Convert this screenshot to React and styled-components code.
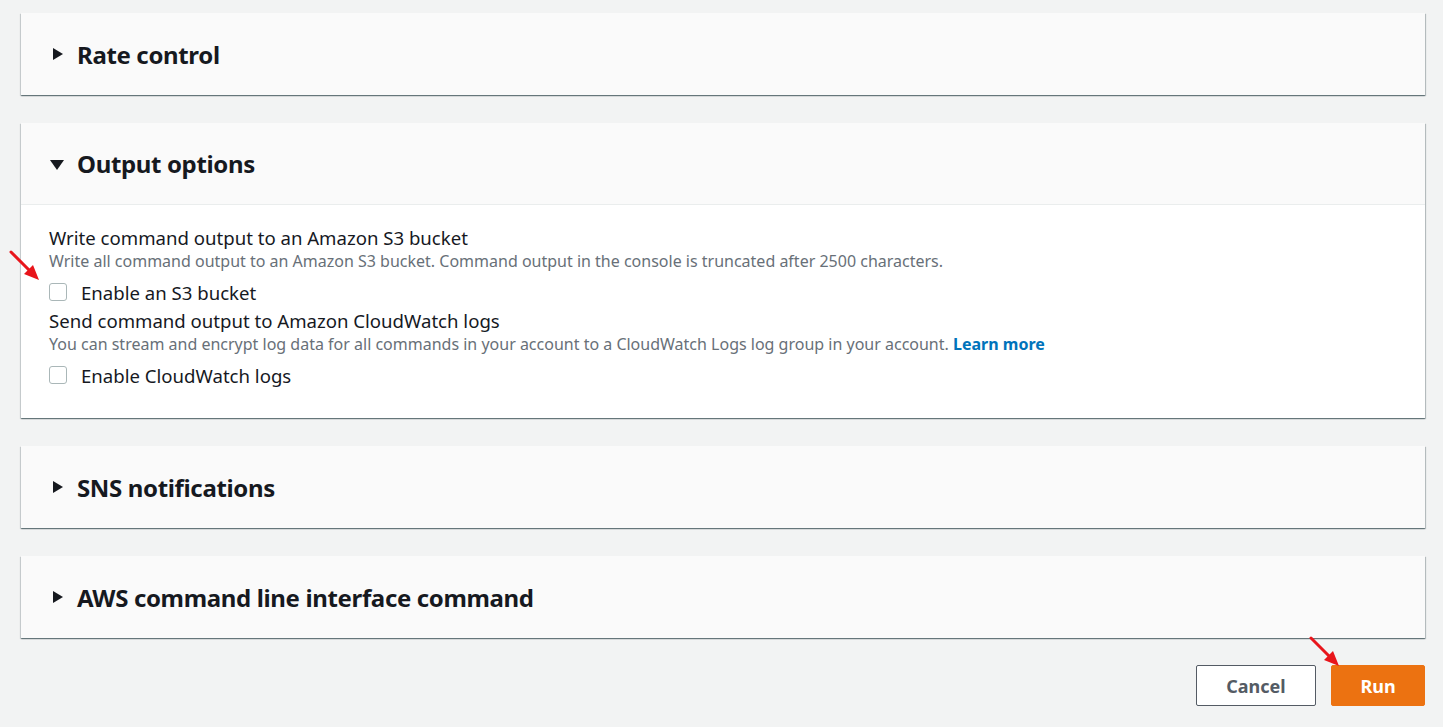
import React from "react";
import styled, { createGlobalStyle } from "styled-components";

const Global = createGlobalStyle`
  html, body { margin: 0; padding: 0; background: #f2f3f3; }
  body { font-family: "Noto Sans", "Open Sans", sans-serif; color: #16191f; }
`;

const Page = styled.div`
  position: relative;
  width: 1443px;
  height: 727px;
  overflow: hidden;
  box-sizing: border-box;
  padding: 13px 18px 0 21px;
  display: flex;
  flex-direction: column;
  gap: 28px;
`;

const Card = styled.section`
  background: #fff;
  box-shadow: 0 1px 1px 0 rgba(0, 28, 36, 0.4), 1px 1px 1px 0 rgba(0, 28, 36, 0.2),
    -1px 1px 1px 0 rgba(0, 28, 36, 0.12);
`;

const Header = styled.div`
  height: 82px;
  box-sizing: border-box;
  background: #fafafa;
  display: flex;
  align-items: center;
  gap: 13px;
  padding-left: 31px;
  border-bottom: ${(p) => (p.$open ? "1px solid #eaeded" : "none")};
`;

const Caret = styled.span`
  width: 0;
  height: 0;
  ${(p) =>
    p.$open
      ? `border-left: 7px solid transparent; border-right: 7px solid transparent; border-top: 10px solid #16191f; margin-top: 2px; margin-left: -2px;`
      : `border-top: 6px solid transparent; border-bottom: 6px solid transparent; border-left: 10px solid #16191f; margin-left: 1px; margin-right: 1px;`}
`;

const Title = styled.h2`
  margin: 0;
  font-size: 24px;
  font-weight: 700;
  letter-spacing: -0.35px;
  color: #16191f;
`;

const Body = styled.div`
  padding: 21px 28px 26px 28px;
  display: flex;
  flex-direction: column;
`;

const FieldLabel = styled.div`
  font-size: 18.6px;
  line-height: 24px;
  color: #16191f;
`;

const FieldDesc = styled.div`
  font-size: 16px;
  line-height: 22px;
  color: #687078;
`;

const Link = styled.a`
  color: #0073bb;
  font-weight: 700;
  text-decoration: none;
`;

const CheckRow = styled.label`
  display: flex;
  align-items: center;
  gap: 14px;
  height: 34px;
  margin-top: 3px;
  font-size: 18.6px;
  color: #16191f;
`;

const Box = styled.span`
  width: 16px;
  height: 16px;
  border: 1px solid #aab7b8;
  border-radius: 3px;
  background: #fff;
`;

const Footer = styled.div`
  display: flex;
  justify-content: flex-end;
  gap: 15px;
  margin-top: -1px;
`;

const Button = styled.button`
  height: 41px;
  box-sizing: border-box;
  padding: 0 28px;
  min-width: ${(p) => (p.$primary ? "94px" : "120px")};
  border-radius: 2px;
  font-family: inherit;
  font-size: 18px;
  font-weight: 700;
  border: 1px solid ${(p) => (p.$primary ? "#ec7211" : "#545b64")};
  background: ${(p) => (p.$primary ? "#ec7211" : "#fff")};
  color: ${(p) => (p.$primary ? "#fff" : "#545b64")};
`;

const Arrow = styled.svg`
  position: absolute;
  left: ${(p) => p.$x}px;
  top: ${(p) => p.$y}px;
`;

function RedArrow({ x, y }) {
  return (
    <Arrow $x={x} $y={y} width="34" height="34" viewBox="0 0 34 34">
      <line x1="2" y1="2" x2="22" y2="22" stroke="#e8151b" strokeWidth="3" strokeLinecap="round" />
      <polygon points="30,30 15,24 24,15" fill="#e8151b" />
    </Arrow>
  );
}

function Section({ title, open, children }) {
  return (
    <Card>
      <Header $open={open}>
        <Caret $open={open} />
        <Title>{title}</Title>
      </Header>
      {open && <Body>{children}</Body>}
    </Card>
  );
}

export default function App() {
  return (
    <>
      <Global />
      <Page>
        <Section title="Rate control" />
        <Section title="Output options" open>
          <FieldLabel>Write command output to an Amazon S3 bucket</FieldLabel>
          <FieldDesc>
            Write all command output to an Amazon S3 bucket. Command output in the console is truncated after 2500 characters.
          </FieldDesc>
          <CheckRow>
            <Box />
            Enable an S3 bucket
          </CheckRow>
          <FieldLabel>Send command output to Amazon CloudWatch logs</FieldLabel>
          <FieldDesc>
            You can stream and encrypt log data for all commands in your account to a CloudWatch Logs log group in your account.{" "}
            <Link href="#">Learn more</Link>
          </FieldDesc>
          <CheckRow>
            <Box />
            Enable CloudWatch logs
          </CheckRow>
        </Section>
        <Section title="SNS notifications" />
        <Section title="AWS command line interface command" />
        <Footer>
          <Button>Cancel</Button>
          <Button $primary>Run</Button>
        </Footer>
        <RedArrow x={9} y={250} />
        <RedArrow x={1309} y={636} />
      </Page>
    </>
  );
}
